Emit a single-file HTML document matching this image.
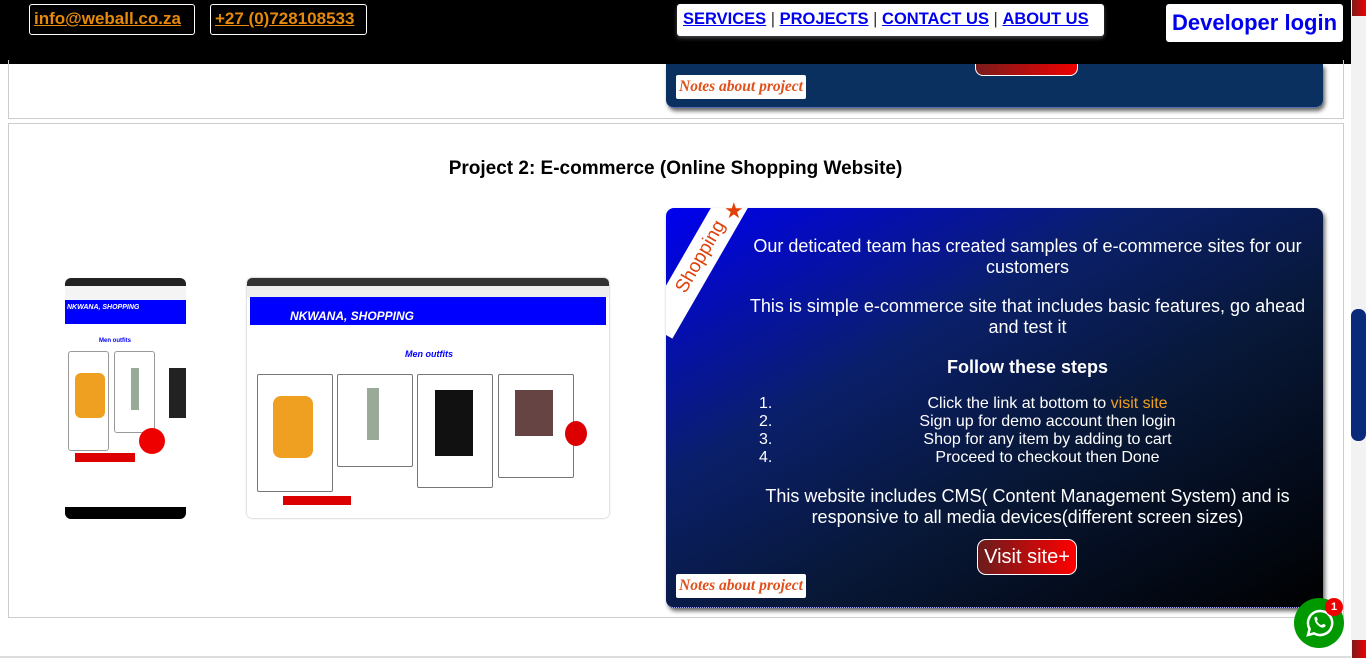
<!DOCTYPE html>
<html><head><meta charset="utf-8">
<style>
*{margin:0;padding:0;box-sizing:border-box}
body{width:1366px;height:658px;overflow:hidden;background:#fff;font-family:"Liberation Sans",Arial,sans-serif;position:relative}
.abs{position:absolute}
.hdr{left:0;top:0;width:1351px;height:64px;background:#000}
.pill{border:1px solid #fff;border-radius:3px;color:#e58a0a;font-weight:bold;font-size:17px;text-decoration:underline;padding:4px 4px;line-height:20px}
.nav{left:677px;top:4px;width:427px;height:32px;background:#fff;border-radius:3px;font-size:16.5px;line-height:31px;padding-left:6px;color:#333;box-shadow:0 2px 4px rgba(255,255,255,.3);white-space:nowrap}
.nav a{color:#00e;font-weight:bold;text-decoration:underline}
.dev{left:1166px;top:4px;width:177px;height:38px;background:#fff;border-radius:3px;color:#00e;font-weight:bold;font-size:22px;line-height:38px;text-align:center}
.box{border:1px solid #ccc}
.card{border-radius:8px;box-shadow:2px 3px 4px rgba(0,0,0,.6);border-bottom:1px dotted #aaf}
.notes{background:#fff;color:#e0501a;font-family:"Liberation Serif",serif;font-style:italic;font-weight:bold;font-size:15.5px;line-height:24px;padding:0 3px;border-radius:2px;white-space:nowrap}
.txt{color:#fff;font-size:18px;text-align:center;line-height:21px}
</style></head><body>
<div class="abs hdr"></div>
<div class="abs pill" style="left:29px;top:4px;width:166px;height:31px">info@weball.co.za</div>
<div class="abs pill" style="left:210px;top:4px;width:157px;height:31px">+27 (0)728108533</div>
<div class="abs nav"><a>SERVICES</a> | <a>PROJECTS</a> | <a>CONTACT US</a> | <a>ABOUT US</a></div>
<div class="abs dev">Developer login</div>
<div class="abs" style="left:1351px;top:0;width:15px;height:658px;background:#f2f2f2"></div>
<div class="abs" style="left:1352px;top:0;width:14px;height:16px;background:linear-gradient(90deg,#7a1c1c,#e00)"></div>
<div class="abs" style="left:1352px;top:640px;width:14px;height:18px;background:linear-gradient(90deg,#7a1c1c,#e00)"></div>
<div class="abs" style="left:1351px;top:309px;width:15px;height:132px;background:#0a2a7a;border-radius:7px"></div>

<div class="abs box" style="left:8px;top:60px;width:1336px;height:59px;border-top:none"></div>
<div class="abs card" style="left:666px;top:64px;width:657px;height:44px;background:#0a3060;border-radius:0 0 8px 8px"></div>
<div class="abs" style="left:975px;top:64px;width:103px;height:12px;background:linear-gradient(90deg,#7a1c1c,#e00);border-radius:0 0 8px 8px;border:1px solid #fff;border-top:none"></div>
<div class="abs notes" style="left:676px;top:75px">Notes about project</div>

<div class="abs box" style="left:8px;top:123px;width:1336px;height:495px"></div>
<div class="abs" style="left:0;top:158px;width:1351px;text-align:center;font-weight:bold;font-size:19px">Project 2: E-commerce (Online Shopping Website)</div>

<div class="abs" style="left:65px;top:278px;width:121px;height:241px;background:#fff;border-radius:6px;overflow:hidden">
 <div style="height:8px;background:#222"></div>
 <div style="height:14px;background:#f4f4f4"></div>
 <div style="height:24px;background:#00f;color:#fff;font-size:7px;font-weight:bold;font-style:italic;padding:4px 2px">NKWANA, SHOPPING</div>
 <div style="position:absolute;left:34px;top:60px;font-size:6px;color:#00f;font-weight:bold">Men outfits</div>
 <div style="position:absolute;left:3px;top:73px;width:41px;height:100px;border:1px solid #999;border-radius:3px"></div>
 <div style="position:absolute;left:10px;top:95px;width:30px;height:45px;background:#f0a020;border-radius:6px"></div>
 <div style="position:absolute;left:49px;top:73px;width:41px;height:82px;border:1px solid #999;border-radius:3px"></div>
 <div style="position:absolute;left:66px;top:90px;width:8px;height:42px;background:#9a9"></div>
 <div style="position:absolute;left:104px;top:90px;width:17px;height:50px;background:#222"></div>
 <div style="position:absolute;left:74px;top:150px;width:26px;height:26px;background:#e00;border-radius:50%"></div>
 <div style="position:absolute;left:10px;top:175px;width:60px;height:9px;background:#d00"></div>
 <div style="position:absolute;left:0;top:229px;width:121px;height:12px;background:#000"></div>
</div>
<div class="abs" style="left:247px;top:278px;width:362px;height:240px;background:#fff;border-radius:5px;overflow:hidden;box-shadow:0 0 2px #aaa">
 <div style="height:8px;background:#333"></div>
 <div style="height:11px;background:#eee"></div>
 <div style="height:28px;background:#00f;margin:0 3px;color:#fff;font-weight:bold;font-style:italic;font-size:12px;padding:12px 0 0 40px;line-height:14px">NKWANA, SHOPPING</div>
 <div style="position:absolute;left:158px;top:71px;font-size:9px;color:#00f;font-weight:bold;font-style:italic">Men outfits</div>
 <div style="position:absolute;left:10px;top:96px;width:76px;height:118px;border:1px solid #777;border-radius:2px"></div>
 <div style="position:absolute;left:26px;top:118px;width:40px;height:62px;background:#f0a020;border-radius:8px"></div>
 <div style="position:absolute;left:90px;top:96px;width:76px;height:93px;border:1px solid #777;border-radius:2px"></div>
 <div style="position:absolute;left:120px;top:110px;width:12px;height:52px;background:#9a9"></div>
 <div style="position:absolute;left:170px;top:96px;width:76px;height:114px;border:1px solid #777;border-radius:2px"></div>
 <div style="position:absolute;left:188px;top:112px;width:38px;height:66px;background:#111"></div>
 <div style="position:absolute;left:251px;top:96px;width:76px;height:104px;border:1px solid #777;border-radius:2px"></div>
 <div style="position:absolute;left:268px;top:112px;width:38px;height:46px;background:#644"></div>
 <div style="position:absolute;left:318px;top:143px;width:22px;height:25px;background:#d00;border-radius:50%"></div>
 <div style="position:absolute;left:36px;top:218px;width:68px;height:9px;background:#d00"></div>
</div>

<div class="abs card" style="left:666px;top:208px;width:657px;height:400px;background:linear-gradient(150deg,#0000f0 0%,#0a1f6a 35%,#081838 60%,#000 100%);overflow:hidden">
 <div style="position:absolute;left:-50px;top:33px;width:170px;height:32px;background:#fff;transform:rotate(-60deg);color:#e0400a;font-size:19px;line-height:32px;text-align:center">Shopping</div>
</div>
<div class="abs" style="left:724px;top:198px;color:#e0400a;font-size:22px">★</div>
<div class="abs txt" style="left:740px;top:236px;width:575px">Our deticated team has created samples of e-commerce sites for our customers</div>
<div class="abs txt" style="left:740px;top:296px;width:575px">This is simple e-commerce site that includes basic features, go ahead and test it</div>
<div class="abs txt" style="left:740px;top:357px;width:575px;font-weight:bold">Follow these steps</div>
<div class="abs" style="left:759px;top:395px;color:#fff;font-size:16px;line-height:18px">1.<br>2.<br>3.<br>4.</div>
<div class="abs" style="left:780px;top:395px;width:535px;color:#fff;font-size:16px;line-height:18px;text-align:center">Click the link at bottom to <span style="color:#f0a020">visit site</span><br>Sign up for demo account then login<br>Shop for any item by adding to cart<br>Proceed to checkout then Done</div>
<div class="abs txt" style="left:740px;top:486px;width:575px">This website includes CMS( Content Management System) and is responsive to all media devices(different screen sizes)</div>
<div class="abs" style="left:977px;top:539px;width:100px;height:36px;border:1px solid #fff;border-radius:9px;background:linear-gradient(90deg,#6a1c1c,#f00);color:#fff;font-size:20px;line-height:34px;text-align:center">Visit site+</div>
<div class="abs notes" style="left:676px;top:574px">Notes about project</div>

<div class="abs" style="left:1294px;top:598px;width:50px;height:50px;border-radius:50%;background:#090"></div>
<svg class="abs" style="left:1304px;top:607px" width="32" height="32" viewBox="0 0 32 32"><path d="M16 4a12 12 0 0 0-10.4 18L4 28l6.2-1.6A12 12 0 1 0 16 4z" fill="none" stroke="#fff" stroke-width="2.5"/><path d="M11 10c1-1 2 0 2.5 1.5s-1 2 0 3.5 3 3 4 3 1.5-1.5 2.5-1 2 1 1.5 2-2 2-4 1.5-6-4-6.5-6.5S10 11 11 10z" fill="#fff"/></svg>
<div class="abs" style="left:1325px;top:598px;width:18px;height:18px;border-radius:50%;background:#e00;color:#fff;font-size:11px;font-weight:bold;text-align:center;line-height:18px">1</div>
<div class="abs" style="left:0;top:656px;width:1351px;height:2px;background:#ddd"></div>
</body></html>
